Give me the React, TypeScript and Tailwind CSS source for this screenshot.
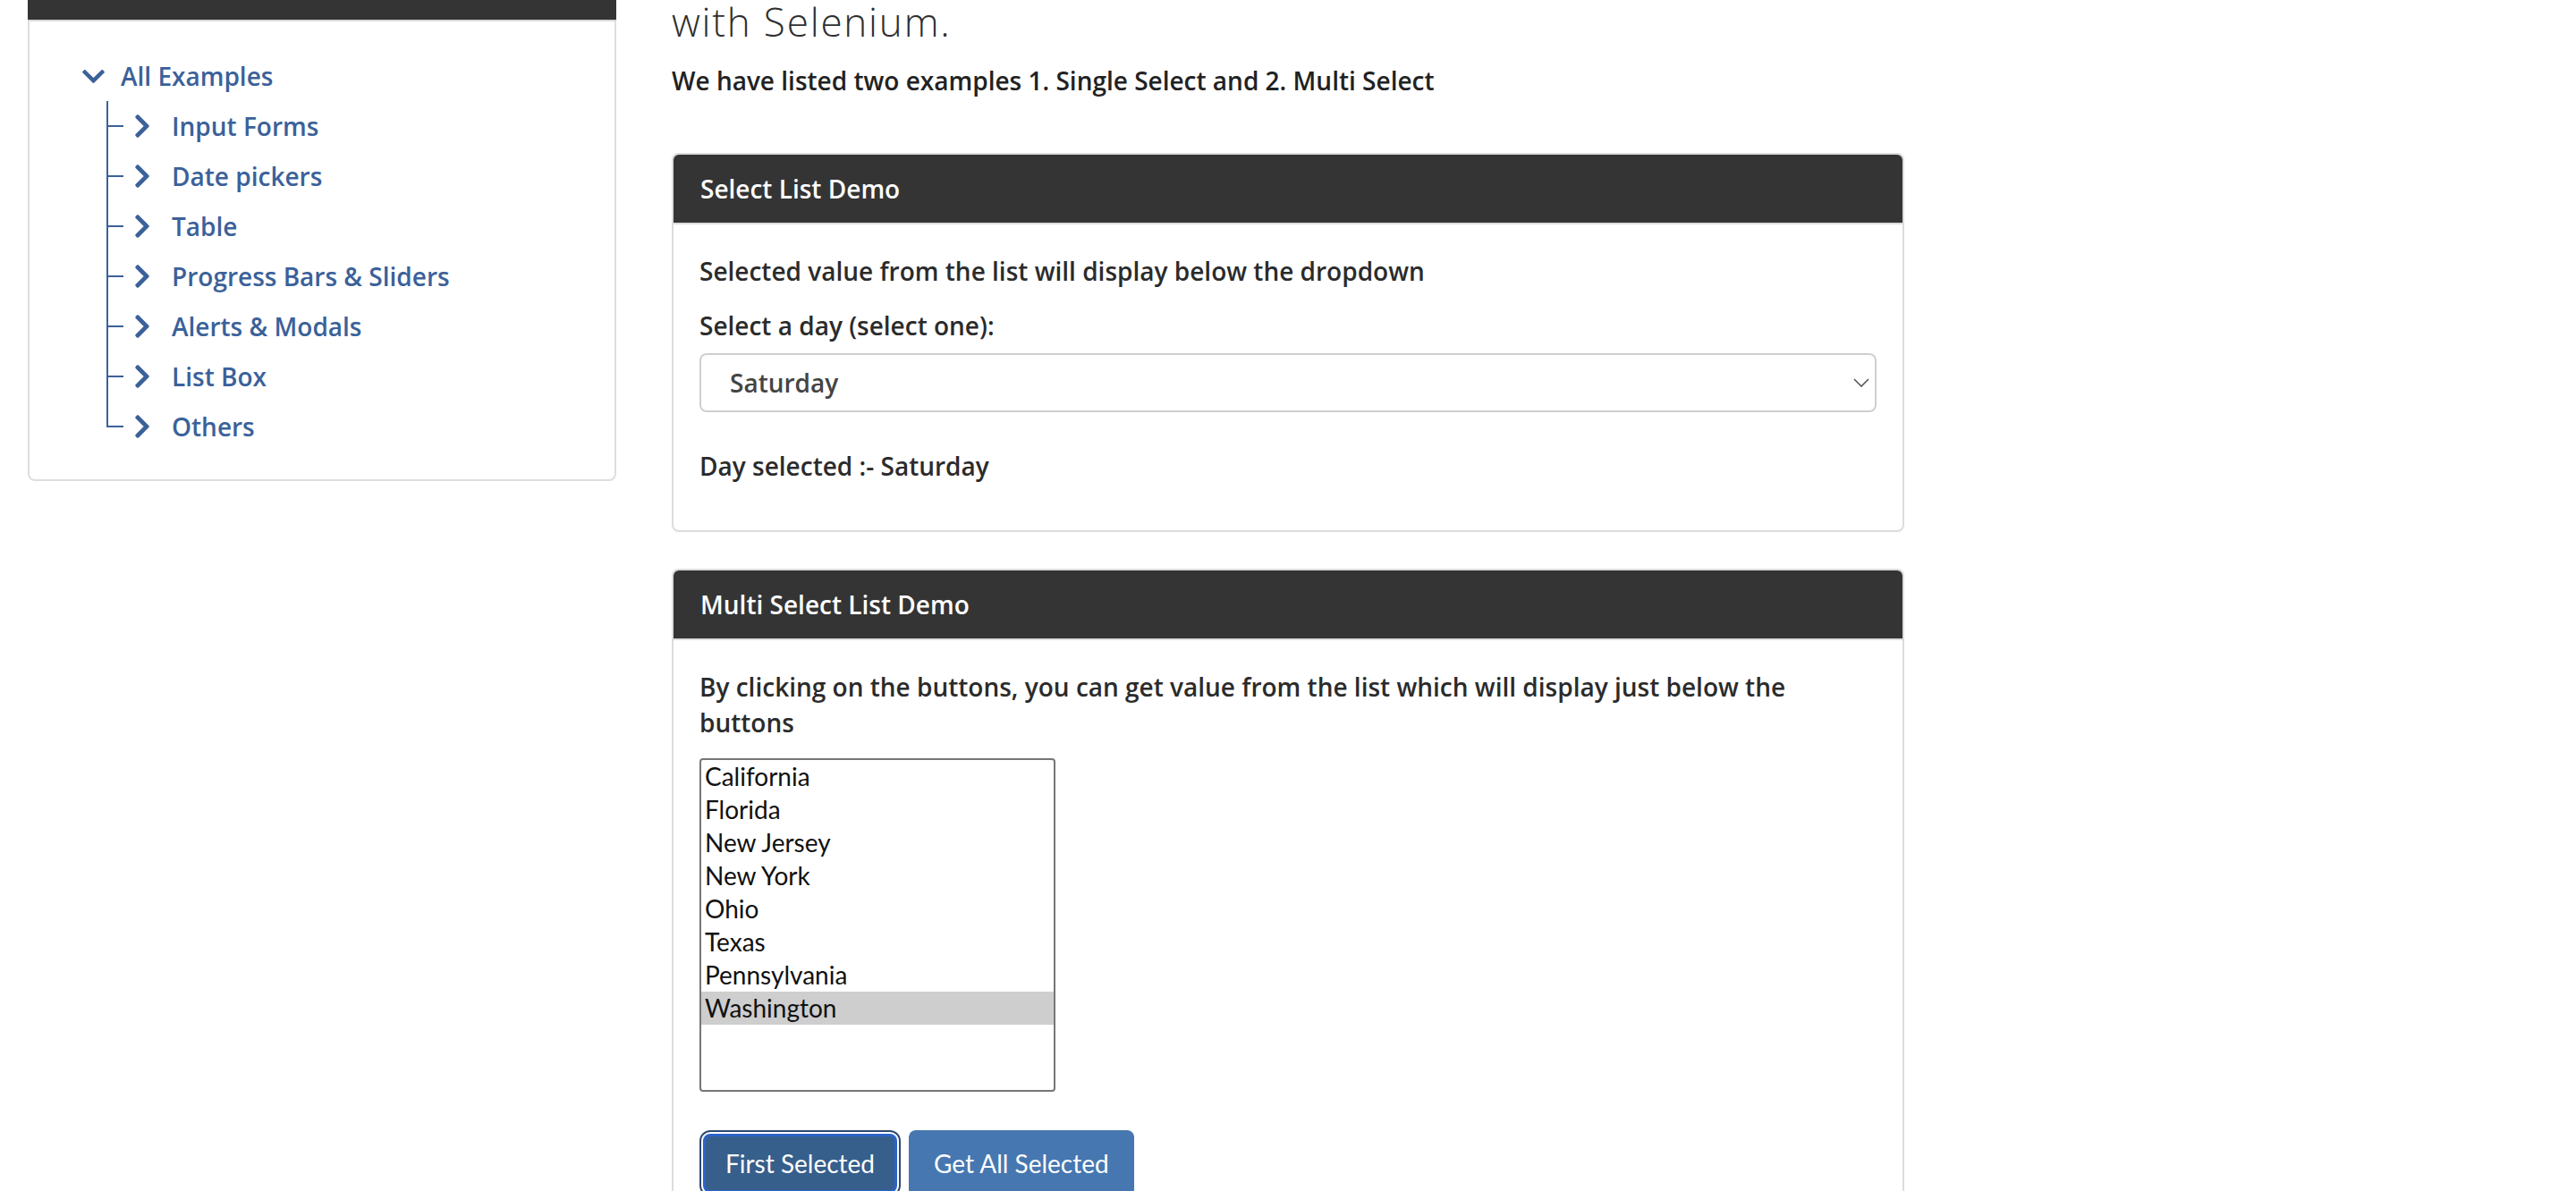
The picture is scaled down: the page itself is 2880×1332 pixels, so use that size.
import React from 'react';
import { FaChevronDown, FaChevronRight } from 'react-icons/fa';

const treeItems = [
  'Input Forms',
  'Date pickers',
  'Table',
  'Progress Bars & Sliders',
  'Alerts & Modals',
  'List Box',
  'Others',
];

const states = [
  'California',
  'Florida',
  'New Jersey',
  'New York',
  'Ohio',
  'Texas',
  'Pennsylvania',
  'Washington',
];

const openSans = { fontFamily: '"Open Sans", "Noto Sans", sans-serif' };

const Sidebar = () => {
  return (
    <div className="ml-[31px] w-[658px] h-[538px] shrink-0 border-2 border-t-0 border-[#dedede] rounded-b-[8px] flex flex-col">
      {/* header strip, mostly scrolled out of view */}
      <div className="h-[24px] bg-[#343434] border-b-2 border-[#d9d9d9] -mx-[2px]"></div>

      <div className="pl-[57px] pt-[33px] flex flex-col text-[#3b6199] font-semibold text-[28px]" style={openSans}>
        <div className="h-[56px] flex items-center gap-[16px]">
          <FaChevronDown size={29} className="shrink-0" />
          <span>All Examples</span>
        </div>

        <div className="ml-[29px] flex flex-col">
          {treeItems.map((item, i) => {
            const last = i === treeItems.length - 1;
            return (
              <div key={item} className="h-[56px] flex items-center">
                {/* connector lines */}
                <div className="w-[19px] h-full flex flex-col shrink-0">
                  <div className="h-[29px] border-l-2 border-b-2 border-[#3b6199]"></div>
                  <div className={last ? 'flex-1' : 'flex-1 border-l-2 border-[#3b6199]'}></div>
                </div>
                <FaChevronRight size={30} className="ml-[6px] shrink-0" />
                <span className="ml-[18px]">{item}</span>
              </div>
            );
          })}
        </div>
      </div>
    </div>
  );
};

const CardHeader = ({ title }: { title: string }) => (
  <div className="h-[78px] bg-[#343434] border-b-2 border-[#dcdcdc] rounded-t-[6px] px-[30px] flex items-center">
    <span className="text-white font-semibold text-[28px]" style={openSans}>{title}</span>
  </div>
);

export default function App() {
  return (
    <div
      className="w-[2880px] h-[1332px] overflow-hidden bg-white flex items-start text-[#2b2b2b]"
      style={{ fontFamily: 'Lato, "Noto Sans", sans-serif' }}
    >
      <Sidebar />

      <div className="ml-[62px] w-[1378px] shrink-0 flex flex-col">
        <h1
          className="h-[48px] text-[44px] leading-[48px] font-light text-[#2f2f2f] tracking-[1.8px]"
          style={openSans}
        >
          with Selenium.
        </h1>
        <p className="mt-[22px] h-[40px] leading-[40px] text-[28px] font-semibold text-[#222]" style={openSans}>
          We have listed two examples 1. Single Select and 2. Multi Select
        </p>

        {/* Single select */}
        <div className="mt-[61px] border-2 border-[#dcdcdc] rounded-[8px] flex flex-col" style={openSans}>
          <CardHeader title="Select List Demo" />
          <div className="px-[29px] pt-[32px] pb-[52px] flex flex-col text-[28px] font-semibold">
            <div className="h-[40px] leading-[40px]">Selected value from the list will display below the dropdown</div>
            <div className="mt-[21px] h-[40px] leading-[40px]">Select a day (select one):</div>
            <div className="mt-[11px] h-[66px] border-2 border-[#cfcfcf] rounded-[8px] pl-[32px] pr-[6px] flex items-center justify-between">
              <span className="text-[#444]">Saturday</span>
              <svg width="18" height="10" viewBox="0 0 18 10" fill="none">
                <polyline points="1,1 9,9 17,1" stroke="#555" strokeWidth="1.6" />
              </svg>
            </div>
            <div className="mt-[40px] h-[40px] leading-[40px]">Day selected :- Saturday</div>
          </div>
        </div>

        {/* Multi select */}
        <div className="mt-[41px] border-2 border-[#dcdcdc] rounded-[8px] flex flex-col">
          <CardHeader title="Multi Select List Demo" />
          <div className="px-[29px] pt-[32px] pb-[40px] flex flex-col">
            <p className="text-[28px] font-semibold leading-[40px]" style={openSans}>
              By clicking on the buttons, you can get value from the list which will display just below the
              <br />
              buttons
            </p>
            <div className="mt-[20px] w-[398px] h-[373px] border-2 border-[#767676] rounded-[4px] flex flex-col text-[28px] text-[#111]">
              {states.map((s) => (
                <div
                  key={s}
                  className={
                    s === 'Washington'
                      ? 'h-[37px] leading-[37px] pl-[4px] bg-[#cecece]'
                      : 'h-[37px] leading-[37px] pl-[4px]'
                  }
                >
                  {s}
                </div>
              ))}
            </div>
            <div className="mt-[43px] flex items-start gap-[13px] text-white text-[28px]">
              <button className="ml-[4px] mt-[4px] h-[66px] px-[22px] bg-[#365f8b] border-[3px] border-[#2c63c9] rounded-[8px] shadow-[0_0_0_2px_#ffffff,0_0_0_4px_#2b4870]">
                First Selected
              </button>
              <button className="h-[74px] px-[28px] bg-[#4677b0] rounded-[8px]">
                Get All Selected
              </button>
            </div>
          </div>
        </div>
      </div>
    </div>
  );
}
